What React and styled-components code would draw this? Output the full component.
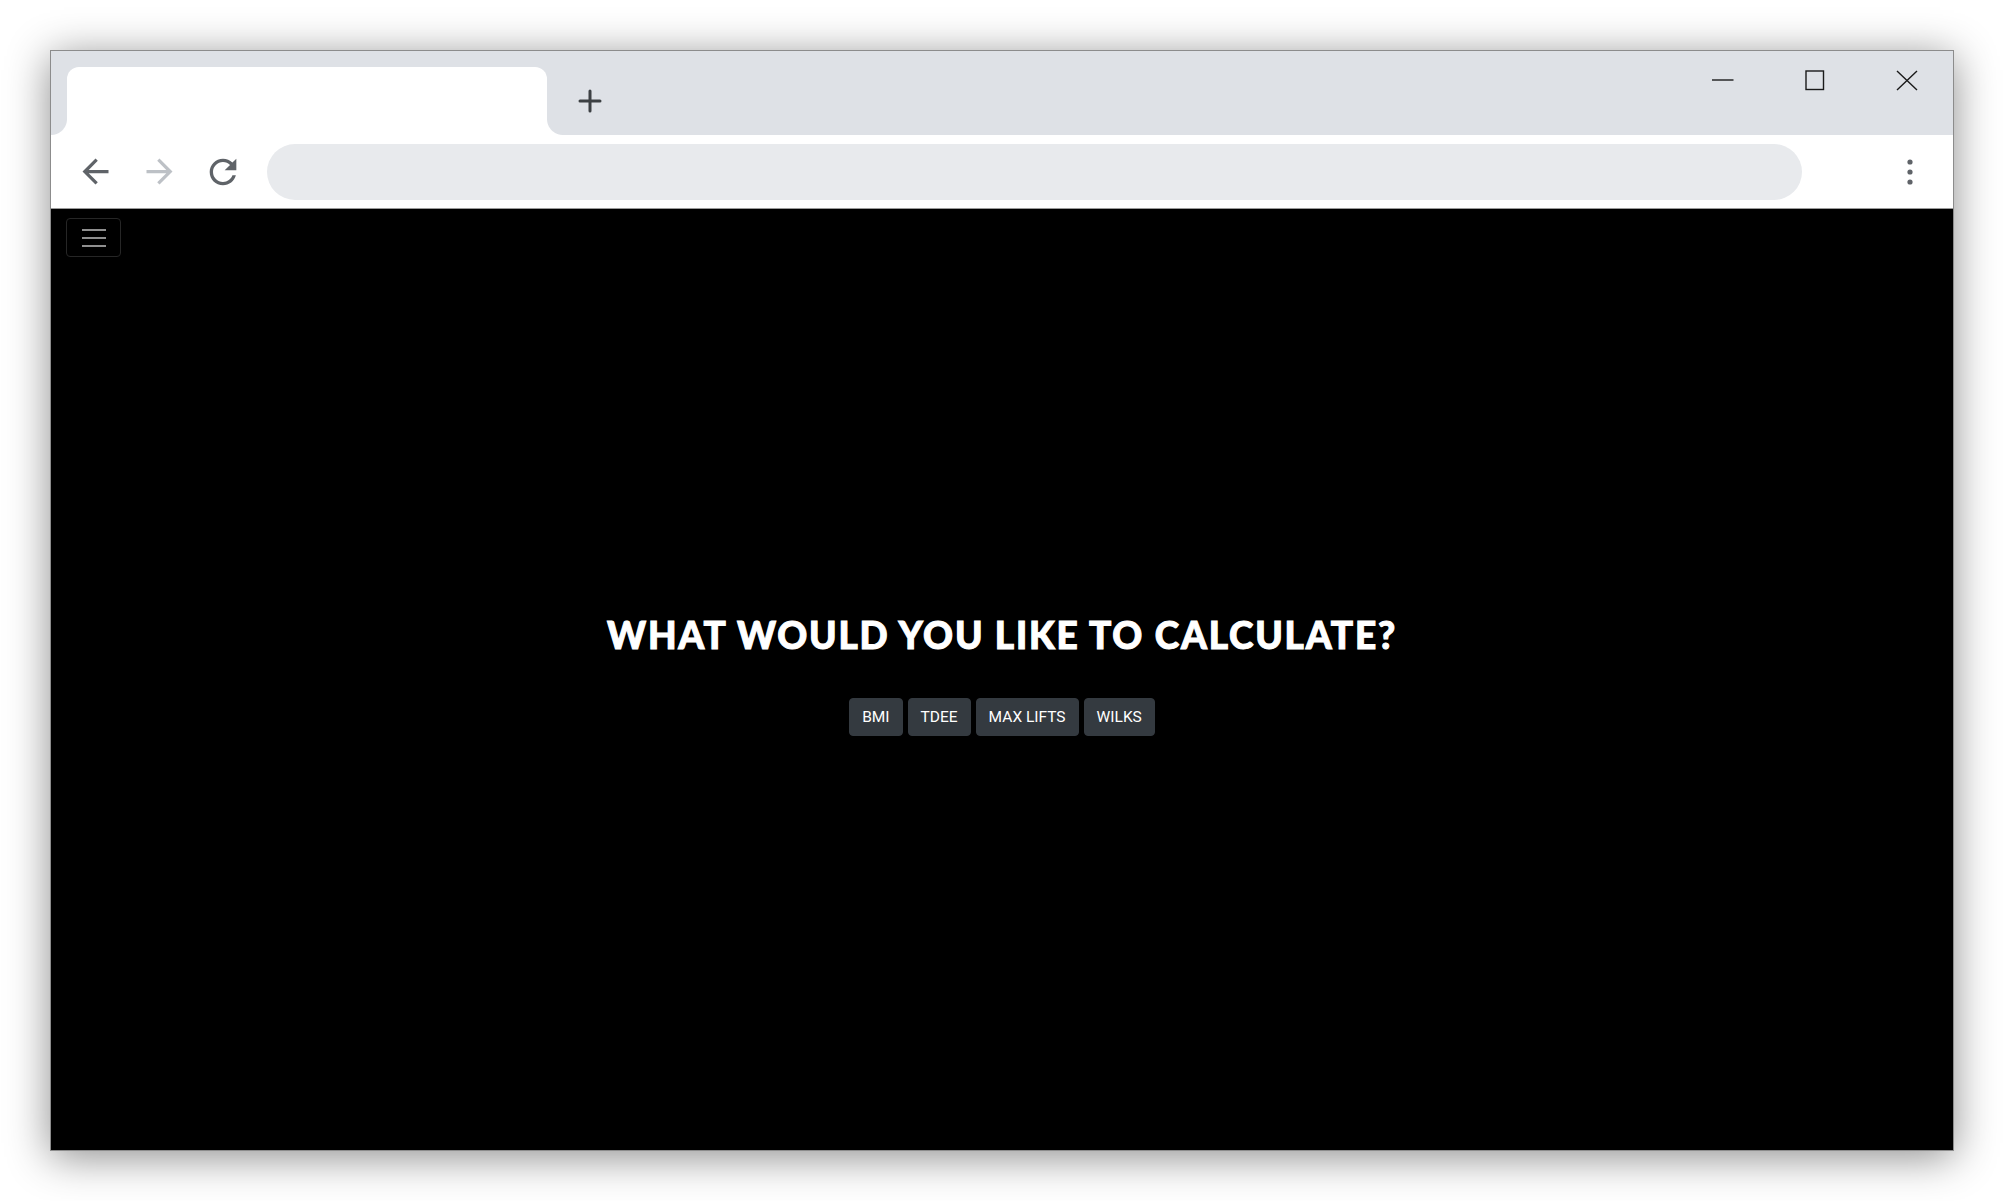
import React from 'react';
import styled, { createGlobalStyle } from 'styled-components';

const GlobalStyle = createGlobalStyle`
  html, body { margin: 0; padding: 0; background: #ffffff; }
  body { width: 2004px; height: 1201px; overflow: hidden; font-family: "Open Sans", "Liberation Sans", sans-serif; }
  #root { height: 100%; }
  * { box-sizing: border-box; }
`;

const Desktop = styled.div`
  width: 2004px;
  height: 1201px;
  padding: 50px;
  display: flex;
`;

const Window = styled.div`
  flex: 1;
  display: flex;
  flex-direction: column;
  border: 1px solid #8c8c8c;
  box-shadow: 0 6px 40px rgba(0, 0, 0, 0.45);
  background: #000;
`;

const TabStrip = styled.div`
  height: 84px;
  flex: none;
  display: flex;
  align-items: flex-start;
  padding-left: 16px;
  background: #dee1e6;
`;

const Tab = styled.div`
  position: relative;
  margin-top: 16px;
  width: 480px;
  height: 68px;
  background: #ffffff;
  border-radius: 12px 12px 0 0;
  &::before, &::after {
    content: "";
    position: absolute;
    bottom: 0;
    width: 16px;
    height: 16px;
  }
  &::before {
    left: -16px;
    background: radial-gradient(circle at 0 0, #dee1e6 15.5px, #ffffff 16.5px);
  }
  &::after {
    right: -16px;
    background: radial-gradient(circle at 100% 0, #dee1e6 15.5px, #ffffff 16.5px);
  }
`;

const NewTabButton = styled.div`
  margin-top: 28px;
  margin-left: 21px;
  width: 44px;
  height: 44px;
  display: flex;
  align-items: center;
  justify-content: center;
`;

const Spacer = styled.div`
  flex: 1;
`;

const WindowControls = styled.div`
  display: flex;
`;

const ControlButton = styled.div`
  width: 92px;
  height: 58px;
  display: flex;
  align-items: center;
  justify-content: center;
`;

const Toolbar = styled.div`
  height: 74px;
  flex: none;
  display: flex;
  align-items: center;
  padding: 0 11px 0 12px;
  background: #ffffff;
  border-bottom: 1px solid #9a9a9a;
`;

const NavButton = styled.div`
  width: 64px;
  height: 64px;
  display: flex;
  align-items: center;
  justify-content: center;
  color: ${(p) => (p.$disabled ? '#bdc1c6' : '#5f6368')};
`;

const AddressBar = styled.div`
  flex: 1;
  height: 56px;
  margin-left: 12px;
  margin-right: 76px;
  border-radius: 28px;
  background: #e8eaed;
`;

const Content = styled.div`
  flex: 1;
  display: flex;
  flex-direction: column;
  background: #000000;
`;

const Navbar = styled.div`
  padding: 9px 15px;
  display: flex;
`;

const Toggler = styled.div`
  width: 55px;
  height: 39px;
  border: 1px solid #262626;
  border-radius: 4px;
  display: flex;
  flex-direction: column;
  align-items: center;
  justify-content: center;
  gap: 6px;
`;

const TogglerLine = styled.span`
  display: block;
  width: 24px;
  height: 2px;
  background: #8f8f8f;
`;

const Main = styled.main`
  flex: 1;
  display: flex;
  flex-direction: column;
  align-items: center;
  justify-content: center;
  padding-bottom: 70px;
`;

const Title = styled.h1`
  margin: 0 0 39px;
  font-family: Lato, "Liberation Sans", sans-serif;
  font-weight: 900;
  font-size: 37px;
  line-height: 48px;
  color: #ffffff;
  letter-spacing: 1.8px;
  -webkit-text-stroke: 1px #ffffff;
`;

const ButtonRow = styled.div`
  display: flex;
  gap: 5px;
`;

const CalcButton = styled.button`
  height: 38px;
  padding: 6px 12px;
  border: 1px solid #343a40;
  border-radius: 4px;
  background: #343a40;
  color: #ffffff;
  font-family: Roboto, "Open Sans", sans-serif;
  font-size: 15.5px;
  line-height: 24px;
  cursor: pointer;
`;

const REFRESH_PATH =
  'M17.65 6.35C16.2 4.9 14.21 4 12 4c-4.42 0-7.99 3.58-7.99 8s3.57 8 7.99 8c3.73 0 6.84-2.55 7.73-6h-2.08c-.82 2.33-3.04 4-5.65 4-3.31 0-6-2.69-6-6s2.69-6 6-6c1.66 0 3.14.69 4.22 1.78L13 11h7V4l-2.35 2.35z';

export default function App() {
  return (
    <>
      <GlobalStyle />
      <Desktop>
        <Window>
          <TabStrip>
            <Tab />
            <NewTabButton>
              <svg width="24" height="24" viewBox="0 0 24 24">
                <path d="M12 2v20M2 12h20" stroke="#3c4043" strokeWidth="3" strokeLinecap="round" fill="none" />
              </svg>
            </NewTabButton>
            <Spacer />
            <WindowControls>
              <ControlButton>
                <svg width="22" height="4" viewBox="0 0 22 4">
                  <path d="M0 2h21.5" stroke="#1a1a1a" strokeWidth="1.4" fill="none" />
                </svg>
              </ControlButton>
              <ControlButton>
                <svg width="20" height="21" viewBox="0 0 20 21">
                  <rect x="1" y="1" width="17.5" height="18.5" stroke="#1a1a1a" strokeWidth="1.4" fill="none" />
                </svg>
              </ControlButton>
              <ControlButton>
                <svg width="22" height="21" viewBox="0 0 22 21">
                  <path d="M1 1l20 19M21 1L1 20" stroke="#1a1a1a" strokeWidth="1.4" fill="none" />
                </svg>
              </ControlButton>
            </WindowControls>
          </TabStrip>
          <Toolbar>
            <NavButton>
              <svg width="39" height="39" viewBox="0 0 24 24">
                <path fill="currentColor" d="M20 11H7.83l5.59-5.59L12 4l-8 8 8 8 1.41-1.41L7.83 13H20v-2z" />
              </svg>
            </NavButton>
            <NavButton $disabled>
              <svg width="39" height="39" viewBox="0 0 24 24">
                <path fill="currentColor" d="M12 4l-1.41 1.41L16.17 11H4v2h12.17l-5.58 5.59L12 20l8-8z" />
              </svg>
            </NavButton>
            <NavButton>
              <svg width="40" height="40" viewBox="0 0 24 24">
                <path fill="currentColor" d={REFRESH_PATH} />
              </svg>
            </NavButton>
            <AddressBar />
            <NavButton>
              <svg width="10" height="30" viewBox="0 0 10 30">
                <circle cx="5" cy="5" r="2.6" fill="currentColor" />
                <circle cx="5" cy="15" r="2.6" fill="currentColor" />
                <circle cx="5" cy="25" r="2.6" fill="currentColor" />
              </svg>
            </NavButton>
          </Toolbar>
          <Content>
            <Navbar>
              <Toggler>
                <TogglerLine />
                <TogglerLine />
                <TogglerLine />
              </Toggler>
            </Navbar>
            <Main>
              <Title>WHAT WOULD YOU LIKE TO CALCULATE?</Title>
              <ButtonRow>
                <CalcButton>BMI</CalcButton>
                <CalcButton>TDEE</CalcButton>
                <CalcButton>MAX LIFTS</CalcButton>
                <CalcButton>WILKS</CalcButton>
              </ButtonRow>
            </Main>
          </Content>
        </Window>
      </Desktop>
    </>
  );
}
